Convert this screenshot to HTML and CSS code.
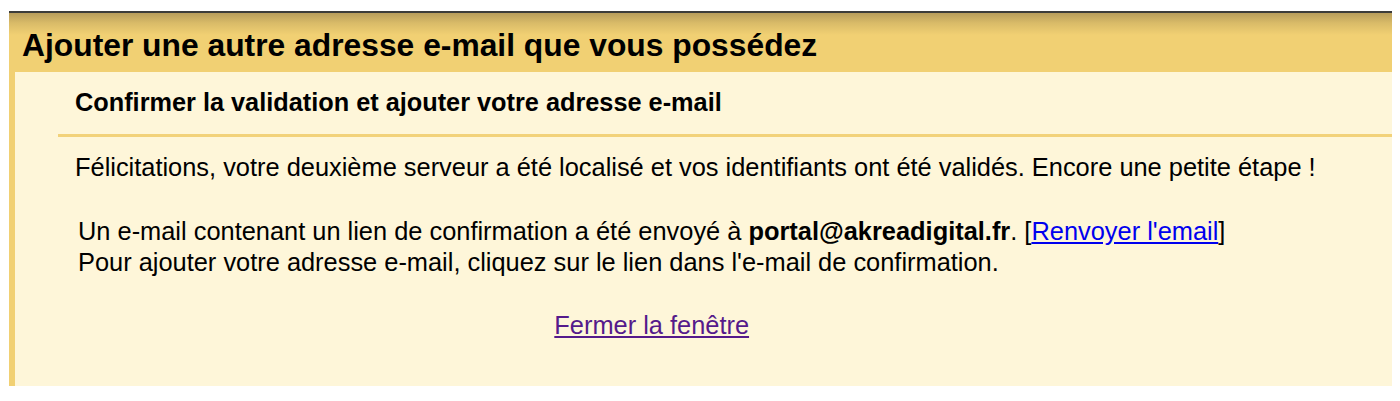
FILE: index.html
```html
<!DOCTYPE html>
<html lang="fr">
<head>
<meta charset="utf-8">
<title>Ajouter une autre adresse e-mail</title>
<link rel="stylesheet" href="styles.css">
</head>
<body>
<div class="dialog">
  <h1 class="dialog-title">Ajouter une autre adresse e-mail que vous possédez</h1>
  <div class="panel">
    <h2 class="panel-title">Confirmer la validation et ajouter votre adresse e-mail</h2>
    <div class="panel-body">
      <p class="intro">Félicitations, votre deuxième serveur a été localisé et vos identifiants ont été validés. Encore une petite étape !</p>
      <div class="confirm">
        <p class="confirm-text">Un e-mail contenant un lien de confirmation a été envoyé à <b>portal@akreadigital.fr</b>. [<a class="link" href="#">Renvoyer l'email</a>]<br>Pour ajouter votre adresse e-mail, cliquez sur le lien dans l'e-mail de confirmation.</p>
        <div class="close-row"><a class="link visited" href="#">Fermer la fenêtre</a></div>
      </div>
    </div>
  </div>
</div>
</body>
</html>
```

FILE: styles.css
```css
html, body {
  margin: 0;
  padding: 0;
  background: #ffffff;
}
body {
  padding: 11px 8px 15px 9px;
  font-family: "Liberation Sans", Arial, Helvetica, sans-serif;
  color: #000;
}
.dialog {
  border-top: 2px solid #3c3c3a;
  background: linear-gradient(to bottom, #b89d5b 0px, #d9bb68 10px, #f1d073 22px, #f1d073 100%);
  padding-left: 6px;
  height: 373px;
  display: flex;
  flex-direction: column;
}
.dialog-title {
  margin: 0;
  height: 59px;
  flex: none;
  box-sizing: border-box;
  padding: 14px 0 0 7px;
  font-size: 31.8px;
  line-height: 36px;
  font-weight: bold;
  white-space: nowrap;
}
.panel {
  flex: 1;
  background: #fef6d9;
}
.panel-title {
  margin: 0 0 0 43px;
  padding: 15px 0 16px 17px;
  border-bottom: 3px solid #f2d27a;
  font-size: 25.3px;
  line-height: 31px;
  font-weight: bold;
  white-space: nowrap;
}
.panel-body {
  padding: 15px 0 0 60px;
  font-size: 25.4px;
  line-height: 30px;
}
.intro {
  margin: 0;
  white-space: nowrap;
}
.confirm {
  display: table;
  margin: 34px 0 0 3px;
}
.confirm-text {
  margin: 0;
  line-height: 31px;
  white-space: nowrap;
}
.close-row {
  text-align: center;
  margin-top: 32px;
  line-height: 30px;
}
.link {
  color: #0000ee;
  text-decoration: underline;
}
.link.visited {
  color: #551a8b;
}
```
